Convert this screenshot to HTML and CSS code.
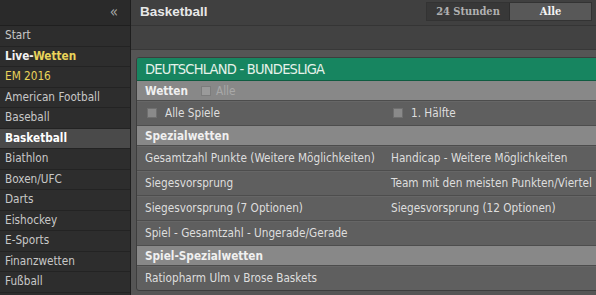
FILE: index.html
```html
<!DOCTYPE html>
<html lang="de">
<head>
<meta charset="utf-8">
<link rel="stylesheet" href="styles.css">
</head>
<body>
<div class="page">
  <aside class="side">
    <div class="side-top"><span class="collapse">«</span></div>
    <ul class="nav">
      <li class="nav-item">Start</li>
      <li class="nav-item live"><b>Live-</b><b class="yellow">Wetten</b></li>
      <li class="nav-item em">EM 2016</li>
      <li class="nav-item">American Football</li>
      <li class="nav-item">Baseball</li>
      <li class="nav-item active">Basketball</li>
      <li class="nav-item">Biathlon</li>
      <li class="nav-item">Boxen/UFC</li>
      <li class="nav-item">Darts</li>
      <li class="nav-item">Eishockey</li>
      <li class="nav-item">E-Sports</li>
      <li class="nav-item">Finanzwetten</li>
      <li class="nav-item">Fußball</li>
    </ul>
  </aside>
  <main class="main">
    <div class="main-head">
      <h1 class="title">Basketball</h1>
      <div class="tabs">
        <span class="tab">24 Stunden</span>
        <span class="tab tab-on">Alle</span>
      </div>
    </div>
    <div class="main-sub"></div>
    <div class="content">
      <section class="card">
        <div class="card-head">DEUTSCHLAND - BUNDESLIGA</div>
        <div class="bar wetten">
          <span class="bar-title">Wetten</span>
          <span class="check light"></span><span class="dim">Alle</span>
        </div>
        <div class="row">
          <div class="cell"><span class="check"></span>Alle Spiele</div>
          <div class="cell"><span class="check"></span>1. Hälfte</div>
        </div>
        <div class="bar">Spezialwetten</div>
        <div class="row">
          <div class="cell">Gesamtzahl Punkte (Weitere Möglichkeiten)</div>
          <div class="cell">Handicap - Weitere Möglichkeiten</div>
        </div>
        <div class="row">
          <div class="cell">Siegesvorsprung</div>
          <div class="cell">Team mit den meisten Punkten/Viertel</div>
        </div>
        <div class="row">
          <div class="cell">Siegesvorsprung (7 Optionen)</div>
          <div class="cell">Siegesvorsprung (12 Optionen)</div>
        </div>
        <div class="row">
          <div class="cell">Spiel - Gesamtzahl - Ungerade/Gerade</div>
          <div class="cell"></div>
        </div>
        <div class="bar">Spiel-Spezialwetten</div>
        <div class="row last">
          <div class="cell">Ratiopharm Ulm v Brose Baskets</div>
          <div class="cell"></div>
        </div>
      </section>
    </div>
  </main>
</div>
</body>
</html>
```

FILE: styles.css
```css
* { box-sizing: border-box; }
html, body { margin: 0; padding: 0; }
body {
  width: 596px;
  height: 295px;
  overflow: hidden;
  background: #555;
  font-family: "DejaVu Sans Condensed", "DejaVu Sans", sans-serif;
  font-stretch: condensed;
  font-size: 11px;
  color: #d8d8d8;
}
.page { display: flex; height: 295px; }

.side {
  width: 131px;
  flex: none;
  background: #2d2d2d;
  border-right: 1px solid #1e1e1e;
}
.side-top {
  height: 26px;
  display: flex;
  align-items: center;
  justify-content: flex-end;
  padding-right: 12px;
  background: #2a2a2a;
  border-bottom: 1px solid #1f1f1f;
}
.collapse { color: #a8a8a8; font-size: 15px; line-height: 1; font-family: "DejaVu Sans", sans-serif; }
.nav { list-style: none; margin: 0; padding: 0; }
.nav-item {
  height: 20.5px;
  line-height: 19.5px;
  padding-left: 5px;
  border-bottom: 1px solid #232323;
  color: #c8c8c8;
  font-size: 11.7px;
}
.live b { color: #f2f2f2; }
.live .yellow { color: #e9d45a; }
.em { color: #e9d45a; }
.active { background: #4a4a4a; color: #fff; font-weight: bold; }

.main { flex: 1; min-width: 0; display: flex; flex-direction: column; overflow: hidden; }
.main-head {
  height: 26px;
  flex: none;
  display: flex;
  align-items: center;
  justify-content: space-between;
  background: #404040;
  border-bottom: 1px solid #353535;
  padding: 0 4px 0 9px;
}
.title {
  margin: 0;
  font-family: "Liberation Sans", Arial, sans-serif;
  font-stretch: normal;
  font-size: 13.5px;
  font-weight: bold;
  color: #e8e8e8;
  padding-bottom: 2px;
}
.tabs {
  display: flex;
  height: 19px;
  margin-bottom: 3px;
  border: 1px solid #333;
}
.tab {
  width: 82px;
  display: flex;
  align-items: center;
  justify-content: center;
  background: #383838;
  color: #b0b0b0;
  font-weight: bold;
  font-size: 11px;
  font-family: "DejaVu Serif", serif;
  font-stretch: condensed;
}
.tab-on { background: #585858; color: #f4f4f4; border-left: 1px solid #2e2e2e; }

.main-sub {
  height: 24px;
  flex: none;
  background: #424242;
  border-bottom: 1px solid #383838;
}
.content {
  flex: 1;
  background: #555;
  padding: 7px 0 0 5px;
  overflow: hidden;
}
.card {
  width: 494px;
  background: #5f5f5f;
  border: 1px solid #3d3d3d;
  border-radius: 3px;
  overflow: hidden;
  font-size: 11.7px;
}
.card-head {
  height: 23px;
  line-height: 23px;
  padding-left: 8px;
  background: #178560;
  border-bottom: 1px solid #0f5c41;
  color: #e6f2ea;
  font-family: "DejaVu Sans Condensed", sans-serif;
  font-size: 14.5px;
  letter-spacing: -0.75px;
}
.bar {
  height: 20px;
  display: flex;
  align-items: center;
  padding-left: 8px;
  background: #888;
  border-bottom: 1px solid #4c4c4c;
  font-weight: bold;
  color: #f0f0f0;
}
.bar-title { margin-right: 13px; }
.dim { color: #a8a8a8; font-weight: normal; }
.row {
  display: flex;
  height: 25px;
  border-bottom: 1px solid #4d4d4d;
  box-shadow: inset 0 1px 0 #666;
}
.row.last { height: 24px; border-bottom: none; }
.cell {
  width: 247px;
  display: flex;
  align-items: center;
  padding-left: 8px;
  color: #dedede;
}
.check {
  width: 10px;
  height: 10px;
  background: #8a8a8a;
  border: 1px solid #6f6f6f;
  margin: 0 8px 0 2px;
}
.check.light { background: #9a9a9a; border-color: #7c7c7c; margin: 0 5px 0 0; }
```
